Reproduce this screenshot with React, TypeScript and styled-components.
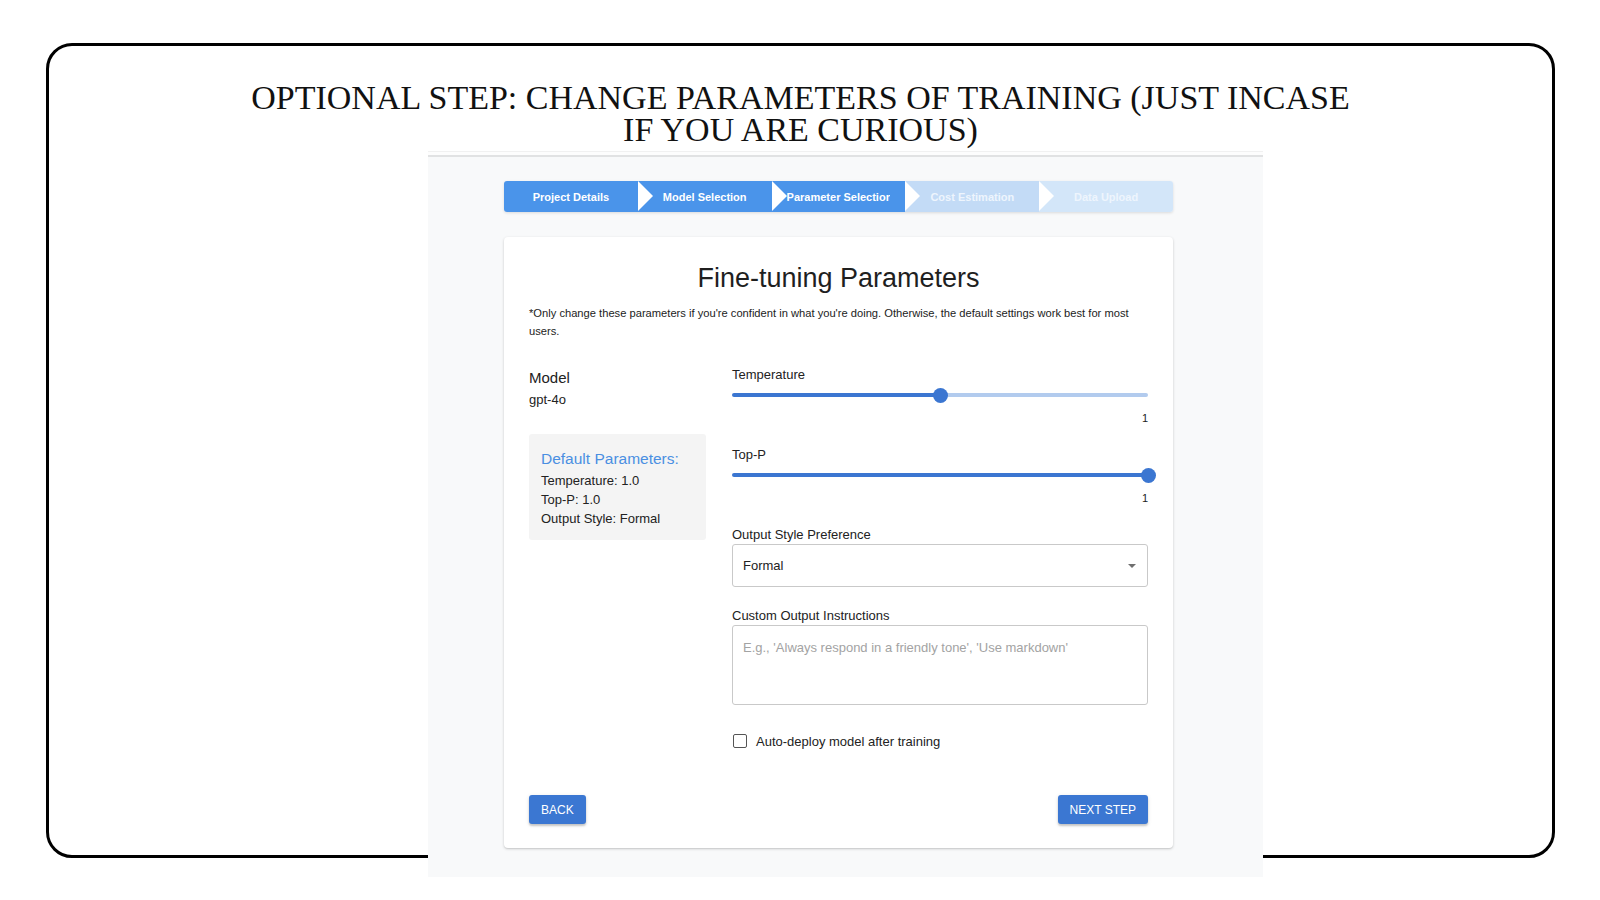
import React from "react";
import styled, { createGlobalStyle } from "styled-components";

const GlobalStyle = createGlobalStyle`
  html, body { margin: 0; padding: 0; background: #ffffff; }
  body { font-family: "Liberation Sans", Arial, sans-serif; color: #222; }
  * { box-sizing: border-box; }
`;

const Page = styled.div`
  width: 1600px;
  height: 900px;
  padding: 43px 0 0 46px;
  overflow: hidden;
`;

const Frame = styled.div`
  width: 1509px;
  height: 815px;
  border: 3px solid #000;
  border-radius: 26px;
  display: flex;
  flex-direction: column;
`;

const Heading = styled.h1`
  margin: 36px 0 0;
  font-family: "Liberation Serif", "Times New Roman", serif;
  font-weight: 400;
  font-size: 34px;
  line-height: 32px;
  text-align: center;
  color: #111;
  letter-spacing: 0;
`;

const Shot = styled.div`
  margin: 5px 0 0 379px;
  width: 835px;
  height: 726px;
  flex: none;
  background: #f8f9fa;
  border-top: 1px solid #f1f1f1;
  display: flex;
  flex-direction: column;
  position: relative;
  z-index: 1;
`;

const ShotTopBand = styled.div`
  height: 5px;
  background: #fdfdfd;
  border-bottom: 2px solid #e1e2e3;
`;

const ShotBody = styled.div`
  padding: 24px 0 0 76px;
  width: 745px;
  display: flex;
  flex-direction: column;
  gap: 25px;
`;

const Stepper = styled.div`
  display: flex;
  height: 31px;
  border-radius: 3px;
  overflow: hidden;
  box-shadow: 0 1px 3px rgba(0, 0, 0, 0.12);
`;

const Step = styled.div<{ $tone: "active" | "next" | "last"; $arrow: boolean }>`
  flex: 1;
  min-width: 0;
  position: relative;
  display: flex;
  align-items: center;
  padding: 0 15px;
  background: ${(p) => (p.$tone === "active" ? "#4a94ea" : p.$tone === "next" ? "#c3dbf6" : "#d3e6f9")};
  color: ${(p) => (p.$tone === "active" ? "#ffffff" : "#eef5fd")};
  font-size: 11px;
  font-weight: 700;
  &::before {
    content: "";
    display: ${(p) => (p.$arrow ? "block" : "none")};
    position: absolute;
    left: 0;
    top: 0;
    border-top: 15.5px solid transparent;
    border-bottom: 15.5px solid transparent;
    border-left: 15px solid #ffffff;
  }
`;

const StepLabel = styled.span`
  flex: 1;
  min-width: 0;
  overflow: hidden;
  white-space: nowrap;
  text-align: center;
`;

const Card = styled.div`
  background: #fff;
  border-radius: 4px;
  box-shadow: 0 1px 3px rgba(0, 0, 0, 0.18), 0 1px 1px rgba(0, 0, 0, 0.06);
  padding: 25px 25px 24px;
  display: flex;
  flex-direction: column;
`;

const CardTitle = styled.h2`
  margin: 0;
  font-size: 27px;
  font-weight: 400;
  line-height: 32px;
  text-align: center;
  color: #1f1f1f;
`;

const Note = styled.p`
  margin: 10px 0 0;
  font-size: 11.17px;
  line-height: 18px;
  color: #222;
`;

const Columns = styled.div`
  margin-top: 25px;
  display: grid;
  grid-template-columns: 177px 1fr;
  column-gap: 26px;
  align-items: start;
`;

const SideCol = styled.div`
  display: flex;
  flex-direction: column;
`;

const ModelTitle = styled.div`
  margin-top: 3px;
  font-size: 15px;
  line-height: 20px;
  color: #222;
`;

const ModelName = styled.div`
  margin-top: 2px;
  font-size: 13px;
  line-height: 19px;
  color: #222;
`;

const DefaultsBox = styled.div`
  margin-top: 25px;
  background: #f4f4f4;
  border-radius: 3px;
  padding: 15px 12px 12px;
`;

const DefaultsTitle = styled.div`
  font-size: 15.5px;
  line-height: 20px;
  color: #4a8fe2;
  margin-bottom: 2px;
`;

const DefaultsLine = styled.div`
  font-size: 13px;
  line-height: 19px;
  color: #222;
`;

const MainCol = styled.div`
  display: flex;
  flex-direction: column;
  gap: 19px;
`;

const Field = styled.div`
  display: flex;
  flex-direction: column;
`;

const FieldLabel = styled.div`
  font-size: 13px;
  line-height: 19px;
  color: #222;
`;

const SliderRoot = styled.div`
  height: 22px;
  display: flex;
  align-items: center;
`;

const SliderFill = styled.div`
  height: 4px;
  background: #3b76d1;
  border-radius: 2px 0 0 2px;
`;

const SliderThumb = styled.div`
  flex: none;
  width: 15px;
  height: 15px;
  margin: 0 -7.5px;
  border-radius: 50%;
  background: #3b76d1;
  position: relative;
  z-index: 1;
`;

const SliderRail = styled.div`
  flex: 1;
  height: 4px;
  background: #b2cbee;
  border-radius: 0 2px 2px 0;
`;

const SliderValue = styled.div`
  margin-top: 4px;
  font-size: 11px;
  line-height: 16px;
  text-align: right;
  padding-right: 0;
  color: #222;
`;

const SelectBox = styled.div`
  height: 43px;
  border: 1px solid #c9c9c9;
  border-radius: 3px;
  display: flex;
  align-items: center;
  justify-content: space-between;
  padding: 0 11px 0 10px;
  font-size: 13px;
  color: #222;
`;

const TextArea = styled.div`
  height: 80px;
  border: 1px solid #c9c9c9;
  border-radius: 3px;
  padding: 12px 10px;
  font-size: 13px;
  line-height: 19px;
  color: #a3a3a3;
`;

const CheckRow = styled.label`
  margin-top: 5px;
  height: 24px;
  display: flex;
  align-items: center;
  gap: 9px;
  font-size: 13px;
  color: #222;
`;

const CheckBox = styled.span`
  width: 14px;
  height: 14px;
  margin-left: 1px;
  border: 1.5px solid #555;
  border-radius: 2px;
  background: #fff;
`;

const Actions = styled.div`
  margin-top: 42px;
  display: flex;
  justify-content: space-between;
`;

const Button = styled.button`
  height: 29px;
  padding: 0 12px;
  border: none;
  border-radius: 3px;
  background: #3b77d2;
  color: #fff;
  font-family: "Liberation Sans", Arial, sans-serif;
  font-size: 12px;
  text-transform: uppercase;
  box-shadow: 0 2px 2px rgba(0, 0, 0, 0.18), 0 1px 4px rgba(0, 0, 0, 0.1);
  cursor: pointer;
`;

const steps: { label: string; tone: "active" | "next" | "last" }[] = [
  { label: "Project Details", tone: "active" },
  { label: "Model Selection", tone: "active" },
  { label: "Parameter Selection", tone: "active" },
  { label: "Cost Estimation", tone: "next" },
  { label: "Data Upload", tone: "last" },
];

function Slider({ value }: { value: number }) {
  return (
    <SliderRoot>
      <SliderFill style={{ width: `${value * 100}%` }} />
      <SliderThumb />
      <SliderRail />
    </SliderRoot>
  );
}

export default function App() {
  return (
    <>
      <GlobalStyle />
      <Page>
        <Frame>
          <Heading>
            OPTIONAL STEP: CHANGE PARAMETERS OF TRAINING (JUST INCASE
            <br />
            IF YOU ARE CURIOUS)
          </Heading>
          <Shot>
            <ShotTopBand />
            <ShotBody>
              <Stepper>
                {steps.map((s, i) => (
                  <Step key={s.label} $tone={s.tone} $arrow={i > 0}>
                    <StepLabel>{s.label}</StepLabel>
                  </Step>
                ))}
              </Stepper>
              <Card>
                <CardTitle>Fine-tuning Parameters</CardTitle>
                <Note>
                  *Only change these parameters if you're confident in what you're doing. Otherwise, the default
                  settings work best for most users.
                </Note>
                <Columns>
                  <SideCol>
                    <ModelTitle>Model</ModelTitle>
                    <ModelName>gpt-4o</ModelName>
                    <DefaultsBox>
                      <DefaultsTitle>Default Parameters:</DefaultsTitle>
                      <DefaultsLine>Temperature: 1.0</DefaultsLine>
                      <DefaultsLine>Top-P: 1.0</DefaultsLine>
                      <DefaultsLine>Output Style: Formal</DefaultsLine>
                    </DefaultsBox>
                  </SideCol>
                  <MainCol>
                    <Field>
                      <FieldLabel>Temperature</FieldLabel>
                      <Slider value={0.5} />
                      <SliderValue>1</SliderValue>
                    </Field>
                    <Field>
                      <FieldLabel>Top-P</FieldLabel>
                      <Slider value={1} />
                      <SliderValue>1</SliderValue>
                    </Field>
                    <Field>
                      <FieldLabel>Output Style Preference</FieldLabel>
                      <SelectBox>
                        <span>Formal</span>
                        <svg width="8" height="4" viewBox="0 0 8 4">
                          <path d="M0 0 L8 0 L4 4 Z" fill="#6f6f6f" />
                        </svg>
                      </SelectBox>
                    </Field>
                    <Field>
                      <FieldLabel>Custom Output Instructions</FieldLabel>
                      <TextArea>E.g., 'Always respond in a friendly tone', 'Use markdown'</TextArea>
                    </Field>
                    <CheckRow>
                      <CheckBox />
                      Auto-deploy model after training
                    </CheckRow>
                  </MainCol>
                </Columns>
                <Actions>
                  <Button>Back</Button>
                  <Button>Next Step</Button>
                </Actions>
              </Card>
            </ShotBody>
          </Shot>
        </Frame>
      </Page>
    </>
  );
}
